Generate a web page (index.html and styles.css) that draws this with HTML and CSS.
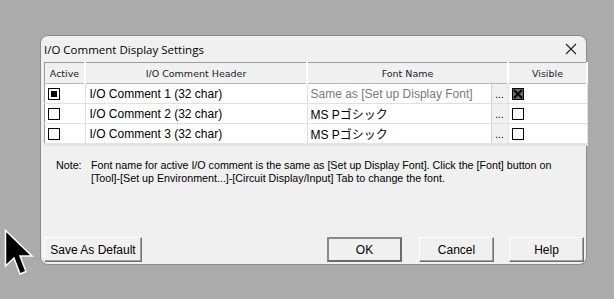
FILE: index.html
```html
<!DOCTYPE html>
<html>
<head>
  <link rel="stylesheet" href="styles.css">
</head>
<body>
  <div class="dialog">
    <div class="titlebar">
      <span class="title">I/O Comment Display Settings</span>
      <svg class="close" width="12" height="12" viewBox="0 0 12 12"><path d="M1 1L11 11M11 1L1 11" stroke="#222" stroke-width="1.1"/></svg>
    </div>
    <table class="grid">
      <tr class="head">
        <th class="c-active">Active</th>
        <th class="c-header">I/O Comment Header</th>
        <th class="c-font">Font Name</th>
        <th class="c-vis">Visible</th>
      </tr>
      <tr>
        <td class="c-active"><span class="check on"></span></td>
        <td class="c-header">I/O Comment 1 (32 char)</td>
        <td class="c-font"><div class="fontcell"><span class="fname muted">Same as [Set up Display Font]</span><span class="dots">...</span></div></td>
        <td class="c-vis"><span class="check x"><svg width="12" height="12" viewBox="0 0 12 12"><path d="M2 2L10 10M10 2L2 10" stroke="#000" stroke-width="2"/></svg></span></td>
      </tr>
      <tr>
        <td class="c-active"><span class="check"></span></td>
        <td class="c-header">I/O Comment 2 (32 char)</td>
        <td class="c-font"><div class="fontcell"><span class="fname">MS Pゴシック</span><span class="dots">...</span></div></td>
        <td class="c-vis"><span class="check"></span></td>
      </tr>
      <tr>
        <td class="c-active"><span class="check"></span></td>
        <td class="c-header">I/O Comment 3 (32 char)</td>
        <td class="c-font"><div class="fontcell"><span class="fname">MS Pゴシック</span><span class="dots">...</span></div></td>
        <td class="c-vis"><span class="check"></span></td>
      </tr>
    </table>
    <div class="note">
      <span class="note-label">Note:</span>
      <span class="note-text">Font name for active I/O comment is the same as [Set up Display Font]. Click the [Font] button on<br>[Tool]-[Set up Environment...]-[Circuit Display/Input] Tab to change the font.</span>
    </div>
    <div class="buttons">
      <button class="btn wide">Save As Default</button>
      <div class="spacer"></div>
      <button class="btn default">OK</button>
      <button class="btn cancel">Cancel</button>
      <button class="btn help">Help</button>
    </div>
  </div>
  <svg class="cursor" width="30" height="48" viewBox="0 0 30 48">
    <path d="M1.5 1.5L1.5 37L10 29L16 45L22 42.5L16 27L28 27Z" fill="#000" stroke="#fff" stroke-width="1.5"/>
  </svg>
</body>
</html>
```

FILE: styles.css
```css
body {
  margin: 0;
  background: #ababab;
  font-family: "Liberation Sans", Arial, sans-serif;
  width: 614px;
  height: 299px;
  overflow: hidden;
}
.dialog {
  margin: 35px 0 0 40px;
  width: 545px;
  height: 228px;
  background: #f0f0f0;
  border: 1px solid #8c8c8c;
  border-radius: 8px;
  display: flex;
  flex-direction: column;
}
.titlebar {
  height: 26px;
  display: flex;
  align-items: center;
  justify-content: space-between;
  padding: 0 8px 0 3px;
}
.title {
  font-family: "Open Sans", "Noto Sans", sans-serif;
  font-size: 11.5px;
  color: #000;
  padding-top: 1px;
}
.close {
  margin-right: 1px;
  margin-top: -1px;
}
.grid {
  margin-left: 3px;
  width: 541px;
  border-collapse: collapse;
  border: 1px solid #9a9a9a;
  border-right-color: #e3e3e3;
  border-bottom: 3px solid #e3e3e3;
  background: #fff;
  table-layout: fixed;
  font-size: 12px;
}
.grid th {
  height: 20px;
  background: #f0f0f0;
  font-weight: normal;
  font-family: "DejaVu Sans", sans-serif;
  font-size: 9.5px;
  color: #1a1a2a;
  border-right: 2px solid #fff;
  border-bottom: 1px solid #b8b8b8;
  padding: 0;
}
.grid td {
  height: 19px;
  border-right: 1px solid #e0e0e0;
  border-bottom: 1px solid #e0e0e0;
  padding: 0;
  vertical-align: middle;
}
.c-active { width: 39px; }
.c-header { width: 220px; }
.c-font { width: 199px; }
.c-vis { width: 77px; }
td.c-header {
  padding-left: 4px;
  color: #000;
}
td.c-active, td.c-vis {
  padding-left: 3px;
}
.fontcell {
  display: flex;
  align-items: center;
  justify-content: space-between;
  height: 19px;
}
.fname {
  padding-left: 3px;
  font-family: "Liberation Sans", "Noto Sans CJK JP", sans-serif;
}
.muted {
  color: #7a7a7a;
}
.dots {
  width: 16px;
  height: 19px;
  background: #f0f0f0;
  border-left: 1px solid #d0d0d0;
  font-size: 10px;
  text-align: center;
  line-height: 22px;
}
.check {
  display: block;
  width: 10px;
  height: 10px;
  border: 1px solid #000;
  background: #fff;
  position: relative;
}
.check.on::after {
  content: "";
  position: absolute;
  left: 2px;
  top: 2px;
  width: 6px;
  height: 6px;
  background: #000;
}
.check.x {
  background: #6a6a6a;
}
.check.x svg {
  position: absolute;
  left: -1px;
  top: -1px;
}
.note {
  display: flex;
  font-size: 10.7px;
  line-height: 13px;
  color: #000;
  white-space: nowrap;
  padding: 13px 0 0 15px;
}
.note-label {
  width: 35px;
}
.buttons {
  margin-top: auto;
  display: flex;
  padding: 0 2px 2px 3px;
}
.spacer {
  flex: 1;
}
.btn {
  width: 75px;
  height: 25px;
  background: #f0f0f0;
  border: 1px solid;
  border-color: #fff #707070 #707070 #fff;
  box-shadow: inset -1px -1px 0 #a0a0a0;
  font-family: "Liberation Sans", Arial, sans-serif;
  font-size: 12px;
  color: #000;
  padding: 0;
}
.btn.wide {
  width: 98px;
}
.btn.cancel {
  margin-left: 17px;
}
.btn.help {
  margin-left: 15px;
}
.btn.default {
  border: 2px solid #6a6a6a;
  border-top-color: #8a8a8a;
  border-left-color: #8a8a8a;
  box-shadow: none;
}
.cursor {
  position: absolute;
  left: 4px;
  top: 229px;
}
```
